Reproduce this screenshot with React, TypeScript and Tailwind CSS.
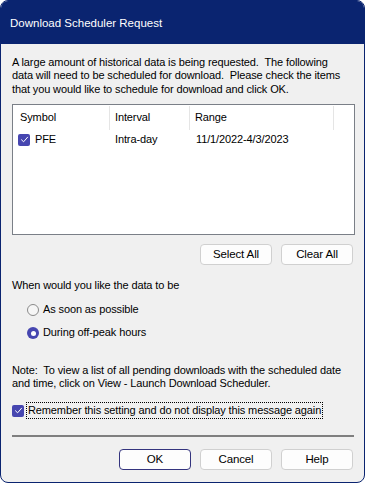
import React from "react";

const font = { fontFamily: '"Liberation Sans", Arial, sans-serif' };

const Check = () => (
    <span className="flex items-center justify-center w-[12px] h-[12px] rounded-[2px] bg-[#4646b0] shrink-0">
        <svg width="9" height="9" viewBox="0 0 9 9" fill="none">
            <path d="M1.5 4.8 L3.6 6.8 L7.6 2.2" stroke="white" strokeWidth="1" strokeLinecap="round" strokeLinejoin="round" />
        </svg>
    </span>
);

const Radio = ({ on }: { on?: boolean }) =>
    on ? (
        <span className="flex items-center justify-center w-[12px] h-[12px] rounded-full bg-[#4646b0] shrink-0">
            <span className="w-[5px] h-[5px] rounded-full bg-white" />
        </span>
    ) : (
        <span className="w-[12px] h-[12px] rounded-full border border-[#8a8a8a] bg-[#f6f6f6] shrink-0" />
    );

const Btn = ({ label, primary }: { label: string; primary?: boolean }) => (
    <button
        className={
            primary
                ? "w-[72px] h-[21px] rounded-[4px] border border-[#34347e] bg-[#fdfdfd] text-[11.5px] leading-none text-black"
                : "w-[72px] h-[21px] rounded-[4px] border border-[#d0d0d0] bg-[#fdfdfd] text-[11.5px] leading-none text-black"
        }
    >
        {label}
    </button>
);

export default function App() {
    return (
        <div className="w-[365px] h-[483px] bg-white" style={font}>
            <div className="w-[365px] h-[483px] flex flex-col rounded-[8px] border border-[#0a2470] bg-[#f0f0f0] overflow-hidden">
                <div className="h-[43px] shrink-0 bg-[#0a2470] flex items-center pl-[9px] pt-[3px] text-white text-[11.5px]">
                    Download Scheduler Request
                </div>

                <div className="flex flex-col pl-[11px] pr-[9px] text-[11px] leading-[13.3px] tracking-[-0.12px] text-black whitespace-nowrap">
                    <p className="mt-[12px]">
                        A large amount of historical data is being requested.&nbsp; The following
                        <br />
                        data will need to be scheduled for download.&nbsp; Please check the items
                        <br />
                        that you would like to schedule for download and click OK.
                    </p>

                    {/* list of requested items */}
                    <div className="mt-[8px] w-[343px] h-[131px] border border-[#7a7f87] bg-white">
                        <div className="flex h-[26px] items-center">
                            <div className="w-[96px] pl-[7px]">Symbol</div>
                            <div className="w-[1px] h-[24px] self-start mt-[1px] bg-[#e5e5e5]" />
                            <div className="w-[79px] pl-[5px]">Interval</div>
                            <div className="w-[1px] h-[24px] self-start mt-[1px] bg-[#e5e5e5]" />
                            <div className="w-[143px] pl-[5px]">Range</div>
                            <div className="w-[1px] h-[24px] self-start mt-[1px] bg-[#e5e5e5]" />
                        </div>
                        <div className="flex h-[18px] items-center">
                            <div className="w-[96px] pl-[5px] flex items-center gap-[5px]">
                                <Check />
                                <span>PFE</span>
                            </div>
                            <div className="w-[1px]" />
                            <div className="w-[79px] pl-[5px]">Intra-day</div>
                            <div className="w-[1px]" />
                            <div className="pl-[6px]">11/1/2022-4/3/2023</div>
                        </div>
                    </div>

                    <div className="mt-[9px] flex justify-end gap-[9px] pr-[2px]">
                        <Btn label="Select All" />
                        <Btn label="Clear All" />
                    </div>

                    <p className="mt-[14px]">When would you like the data to be</p>

                    <div className="mt-[11px] pl-[15px] flex flex-col gap-[10px]">
                        <label className="flex items-center gap-[4px]">
                            <Radio />
                            <span>As soon as possible</span>
                        </label>
                        <label className="flex items-center gap-[4px]">
                            <Radio on />
                            <span>During off-peak hours</span>
                        </label>
                    </div>

                    <p className="mt-[24px]">
                        Note:&nbsp; To view a list of all pending downloads with the scheduled date
                        <br />
                        and time, click on View - Launch Download Scheduler.
                    </p>

                    <label className="mt-[12px] flex items-center gap-[2px]">
                        <Check />
                        <span className="border border-dotted border-black px-[1px] h-[17px] flex items-center">
                            Remember this setting and do not display this message again
                        </span>
                    </label>

                    <div className="mt-[16px] w-[342px] h-[2px] bg-[#7f7f7f]" />

                    <div className="mt-[12px] flex justify-end gap-[9px] pr-[2px]">
                        <Btn label="OK" primary />
                        <Btn label="Cancel" />
                        <Btn label="Help" />
                    </div>
                </div>
            </div>
        </div>
    );
}
